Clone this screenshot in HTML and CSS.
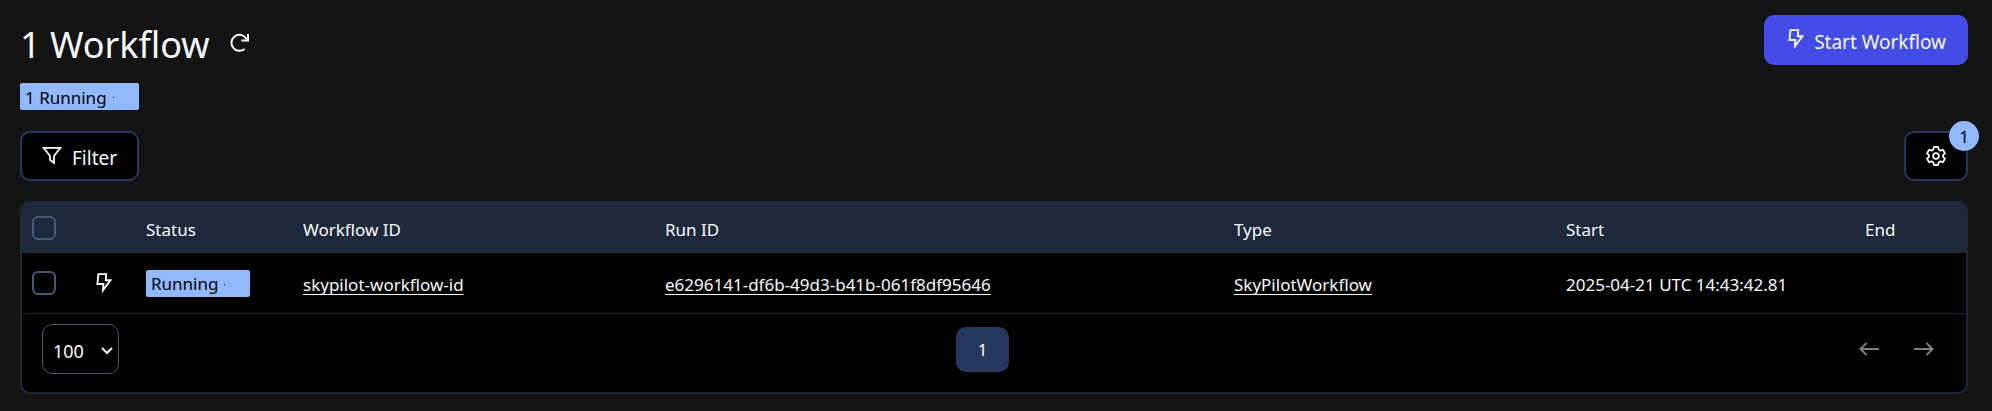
FILE: index.html
```html
<!DOCTYPE html>
<html lang="en">
<head>
<meta charset="utf-8">
<title>Workflows</title>
<link rel="stylesheet" href="styles.css">
</head>
<body>
<svg class="defs" aria-hidden="true">
  <symbol id="bolt" viewBox="0 0 16 20"><path d="M2.4 1.1H10.2L9.8 7.2H14.4L7 17.2L7.4 11H1.4Z" fill="none" stroke="currentColor" stroke-width="1.9"/></symbol>
</svg>
<main class="page">
  <header class="top">
    <div class="heading">
      <h1 class="title">1 Workflow</h1>
      <button class="refresh" type="button" aria-label="Refresh">
        <svg width="20" height="20" viewBox="0 0 20 20" fill="none" stroke="currentColor" stroke-width="2"><path d="M14.6 16A8 8 0 1 1 16.6 6.2"/><path d="M18 1V7.6H11.4"/></svg>
      </button>
    </div>
    <button class="start" type="button"><svg width="16" height="20"><use href="#bolt"/></svg><span class="label">Start Workflow</span></button>
  </header>
  <div class="counts"><span class="badge">1 Running<i class="dot"></i></span></div>
  <div class="tools">
    <button class="tool" type="button">
      <svg width="20" height="20" viewBox="0 0 20 20" fill="none" stroke="currentColor" stroke-width="1.8"><path d="M1.6 1.9H18.4L12 10V16.9L8 13.8V10Z"/></svg><span class="label">Filter</span>
    </button>
    <button class="tool settings" type="button" aria-label="Configure columns">
      <svg width="20" height="20" viewBox="0 0 20 20" fill="none" stroke="currentColor" stroke-width="1.8" stroke-linejoin="round"><path d="M7.9 1H12.1L12.6 3.5L14.5 4.6L16.9 3.8L19 7.4L17.1 9V11L19 12.6L16.9 16.2L14.5 15.4L12.6 16.5L12.1 19H7.9L7.4 16.5L5.5 15.4L3.1 16.2L1 12.6L2.9 11V9L1 7.4L3.1 3.8L5.5 4.6L7.4 3.5Z"/><circle cx="10" cy="10" r="2.9"/></svg>
      <span class="bubble">1</span>
    </button>
  </div>
  <section class="panel">
    <table class="grid">
      <colgroup><col class="c-check"><col class="c-icon"><col class="c-status"><col class="c-id"><col><col class="c-type"><col class="c-start"><col class="c-end"></colgroup>
      <thead>
        <tr><th><input class="check" type="checkbox" aria-label="Select all"></th><th></th><th>Status</th><th>Workflow ID</th><th>Run ID</th><th>Type</th><th>Start</th><th>End</th></tr>
      </thead>
      <tbody>
        <tr>
          <td><input class="check" type="checkbox" aria-label="Select skypilot-workflow-id"></td>
          <td><svg class="row-icon" width="16" height="20"><use href="#bolt"/></svg></td>
          <td><span class="badge">Running<i class="dot"></i></span></td>
          <td><a href="#workflow">skypilot-workflow-id</a></td>
          <td><a href="#run">e6296141-df6b-49d3-b41b-061f8df95646</a></td>
          <td><a href="#type">SkyPilotWorkflow</a></td>
          <td>2025-04-21 UTC 14:43:42.81</td>
          <td></td>
        </tr>
      </tbody>
    </table>
    <footer class="pager">
      <div class="size">
        <select class="select" aria-label="Per page"><option>100</option><option>250</option></select>
        <svg class="chevron" width="12" height="8" viewBox="0 0 12 8" fill="none" stroke="currentColor" stroke-width="2"><path d="M1 1L6 6L11 1"/></svg>
      </div>
      <button class="current" type="button">1</button>
      <nav class="steps" aria-label="Pages">
        <button class="step" type="button" disabled aria-label="Previous"><svg width="20" height="14" viewBox="0 0 20 14" fill="none" stroke="currentColor" stroke-width="2"><path d="M20 7H2M7.5 1L1.5 7L7.5 13"/></svg></button>
        <button class="step" type="button" disabled aria-label="Next"><svg width="20" height="14" viewBox="0 0 20 14" fill="none" stroke="currentColor" stroke-width="2"><path d="M0 7H18M12.5 1L18.5 7L12.5 13"/></svg></button>
      </nav>
    </footer>
  </section>
</main>
</body>
</html>
```
FILE: styles.css
```css
* { box-sizing: border-box; }
body {
  margin: 0;
  background: #141414;
  color: #f8fafc;
  font: 17px/26px "Noto Sans", "Open Sans", sans-serif;
}
button, select { font: inherit; color: inherit; cursor: pointer; }
.defs { position: absolute; width: 0; height: 0; }
.page { padding: 15px 24px 16px 20px; }
.top { display: flex; justify-content: space-between; align-items: flex-start; }
.heading { display: flex; align-items: center; gap: 20px; }
.title { margin: 0; font-size: 36px; line-height: 60px; font-weight: 400; }
.refresh { display: flex; padding: 0 0 4px; border: 0; background: none; }
.start {
  display: flex; align-items: center; gap: 10px;
  height: 50px; padding: 0 22px 0 24px;
  border: 0; border-radius: 10px; background: #444ce7; font-size: 19px;
}
.start svg { margin-bottom: 2px; }
.label { padding-top: 4px; }
.counts { display: flex; margin-top: 8px; }
.badge {
  display: inline-flex; align-items: center; gap: 6px;
  height: 27px; padding: 2px 25px 0 5px; border-radius: 2px;
  background: #92b8ff; color: #000; vertical-align: middle;
}
.dot { width: 1px; height: 1px; background: currentColor; }
.tools { display: flex; justify-content: space-between; margin-top: 21px; }
.tool {
  position: relative; display: flex; align-items: center; gap: 10px;
  height: 50px; padding: 0 20px;
  border: 2px solid #273860; border-radius: 10px; background: #000; font-size: 19px;
}
.bubble {
  position: absolute; top: -12px; right: -13px; width: 30px; height: 30px;
  border-radius: 50%; background: #92b8ff; color: #000; font-size: 17px; line-height: 32px;
}
.panel {
  margin-top: 20px; overflow: hidden;
  border: 2px solid #1e293b; border-radius: 10px; background: #000;
}
.grid { width: 100%; table-layout: fixed; border-collapse: separate; border-spacing: 0; }
.grid th, .grid td { padding: 4px 10px 0; text-align: left; font-weight: 400; white-space: nowrap; }
.grid th { height: 50px; background: #1e293b; }
.grid td { height: 61px; border-bottom: 1px solid #1e293b; }
.grid .badge { margin-bottom: 4px; }
.grid a { color: inherit; text-underline-offset: 3px; text-decoration-skip-ink: none; }
.c-check { width: 64px; }
.c-icon { width: 50px; }
.c-status { width: 157px; }
.c-id { width: 362px; }
.c-type { width: 332px; }
.c-start { width: 299px; }
.c-end { width: 111px; }
.check {
  appearance: none; display: block; width: 24px; height: 24px; margin: 0 0 4px;
  border: 2px solid #475a78; border-radius: 6px;
}
.check:checked { background: #444ce7; }
.row-icon { display: block; margin-bottom: 4px; }
.pager { display: flex; justify-content: space-between; align-items: center; padding: 10px 19px 18px 20px; }
.size { position: relative; }
.select {
  appearance: none; display: block; width: 77px; height: 50px; padding: 4px 10px 0;
  border: 1px solid #475a78; border-radius: 10px; background: #000; font-size: 18px;
}
.chevron { position: absolute; top: 23px; right: 6px; pointer-events: none; }
.current { width: 53px; height: 45px; padding: 2px 0 0; border: 0; border-radius: 10px; background: #273860; }
.steps { display: flex; gap: 9px; }
.step { display: flex; justify-content: center; width: 46px; padding: 0; border: 0; background: none; color: #7f7f7f; }
```
